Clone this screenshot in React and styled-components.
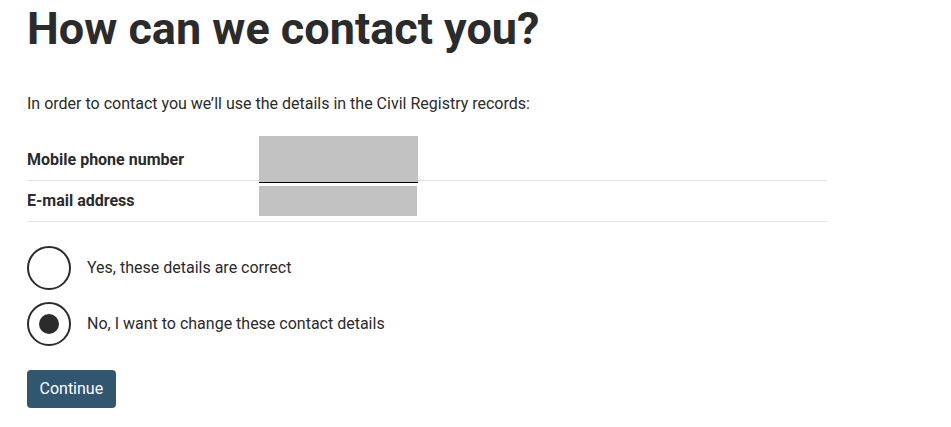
import React from "react";
import styled, { createGlobalStyle } from "styled-components";

const Global = createGlobalStyle`
  html, body { margin: 0; padding: 0; background: #fff; }
  body {
    font-family: Roboto, "Liberation Sans", Arial, sans-serif;
    color: #2b2b2b;
    -webkit-font-smoothing: antialiased;
  }
  * { box-sizing: border-box; }
`;

const Page = styled.main`
  padding: 2px 27px 20px;
`;

const Title = styled.h1`
  margin: 0;
  font-size: 45px;
  line-height: 54px;
  font-weight: 700;
  color: #2b2b2b;
`;

const Intro = styled.p`
  margin: 36px 0 0;
  font-size: 16px;
  line-height: 24px;
`;

const Details = styled.div`
  width: 800px;
  margin-top: 24px;
  display: flex;
  flex-direction: column;
`;

const Row = styled.div`
  display: flex;
  align-items: center;
  height: 41px;
  border-bottom: 1px solid #e3e3e3;
`;

const Label = styled.div`
  width: 232px;
  flex: none;
  font-size: 16px;
  line-height: 24px;
  font-weight: 700;
`;

const Redacted = styled.div`
  width: ${(p) => p.$w}px;
  height: ${(p) => p.$h}px;
  flex: none;
  background: #c2c2c2;
  border-bottom: ${(p) => (p.$underline ? "1px solid #000" : "none")};
  margin-bottom: ${(p) => (p.$underline ? "1px" : "0")};
`;

const Options = styled.div`
  margin-top: 24px;
  display: flex;
  flex-direction: column;
  gap: 12px;
`;

const Option = styled.label`
  display: flex;
  align-items: center;
  gap: 16px;
  font-size: 16px;
  line-height: 24px;
  cursor: pointer;
`;

const Circle = styled.span`
  width: 44px;
  height: 44px;
  flex: none;
  border: 2px solid #2b2b2b;
  border-radius: 50%;
  display: flex;
  align-items: center;
  justify-content: center;
  background: #fff;

  &::after {
    content: "";
    width: 20px;
    height: 20px;
    border-radius: 50%;
    background: #2b2b2b;
    display: ${(p) => (p.$checked ? "block" : "none")};
  }
`;

const Button = styled.button`
  margin-top: 24px;
  display: block;
  font-family: inherit;
  font-size: 16px;
  line-height: 22px;
  padding: 8px 12.5px;
  color: #fff;
  background: #30576f;
  border: none;
  border-radius: 4px;
  cursor: pointer;
`;

export default function App() {
  const [choice, setChoice] = React.useState("no");
  return (
    <>
      <Global />
      <Page>
        <Title>How can we contact you?</Title>
        <Intro>In order to contact you we’ll use the details in the Civil Registry records:</Intro>
        <Details>
          <Row>
            <Label>Mobile phone number</Label>
            <Redacted $w={159} $h={47} $underline />
          </Row>
          <Row>
            <Label>E-mail address</Label>
            <Redacted $w={158} $h={30} />
          </Row>
        </Details>
        <Options>
          <Option onClick={() => setChoice("yes")}>
            <Circle $checked={choice === "yes"} />
            Yes, these details are correct
          </Option>
          <Option onClick={() => setChoice("no")}>
            <Circle $checked={choice === "no"} />
            No, I want to change these contact details
          </Option>
        </Options>
        <Button>Continue</Button>
      </Page>
    </>
  );
}
